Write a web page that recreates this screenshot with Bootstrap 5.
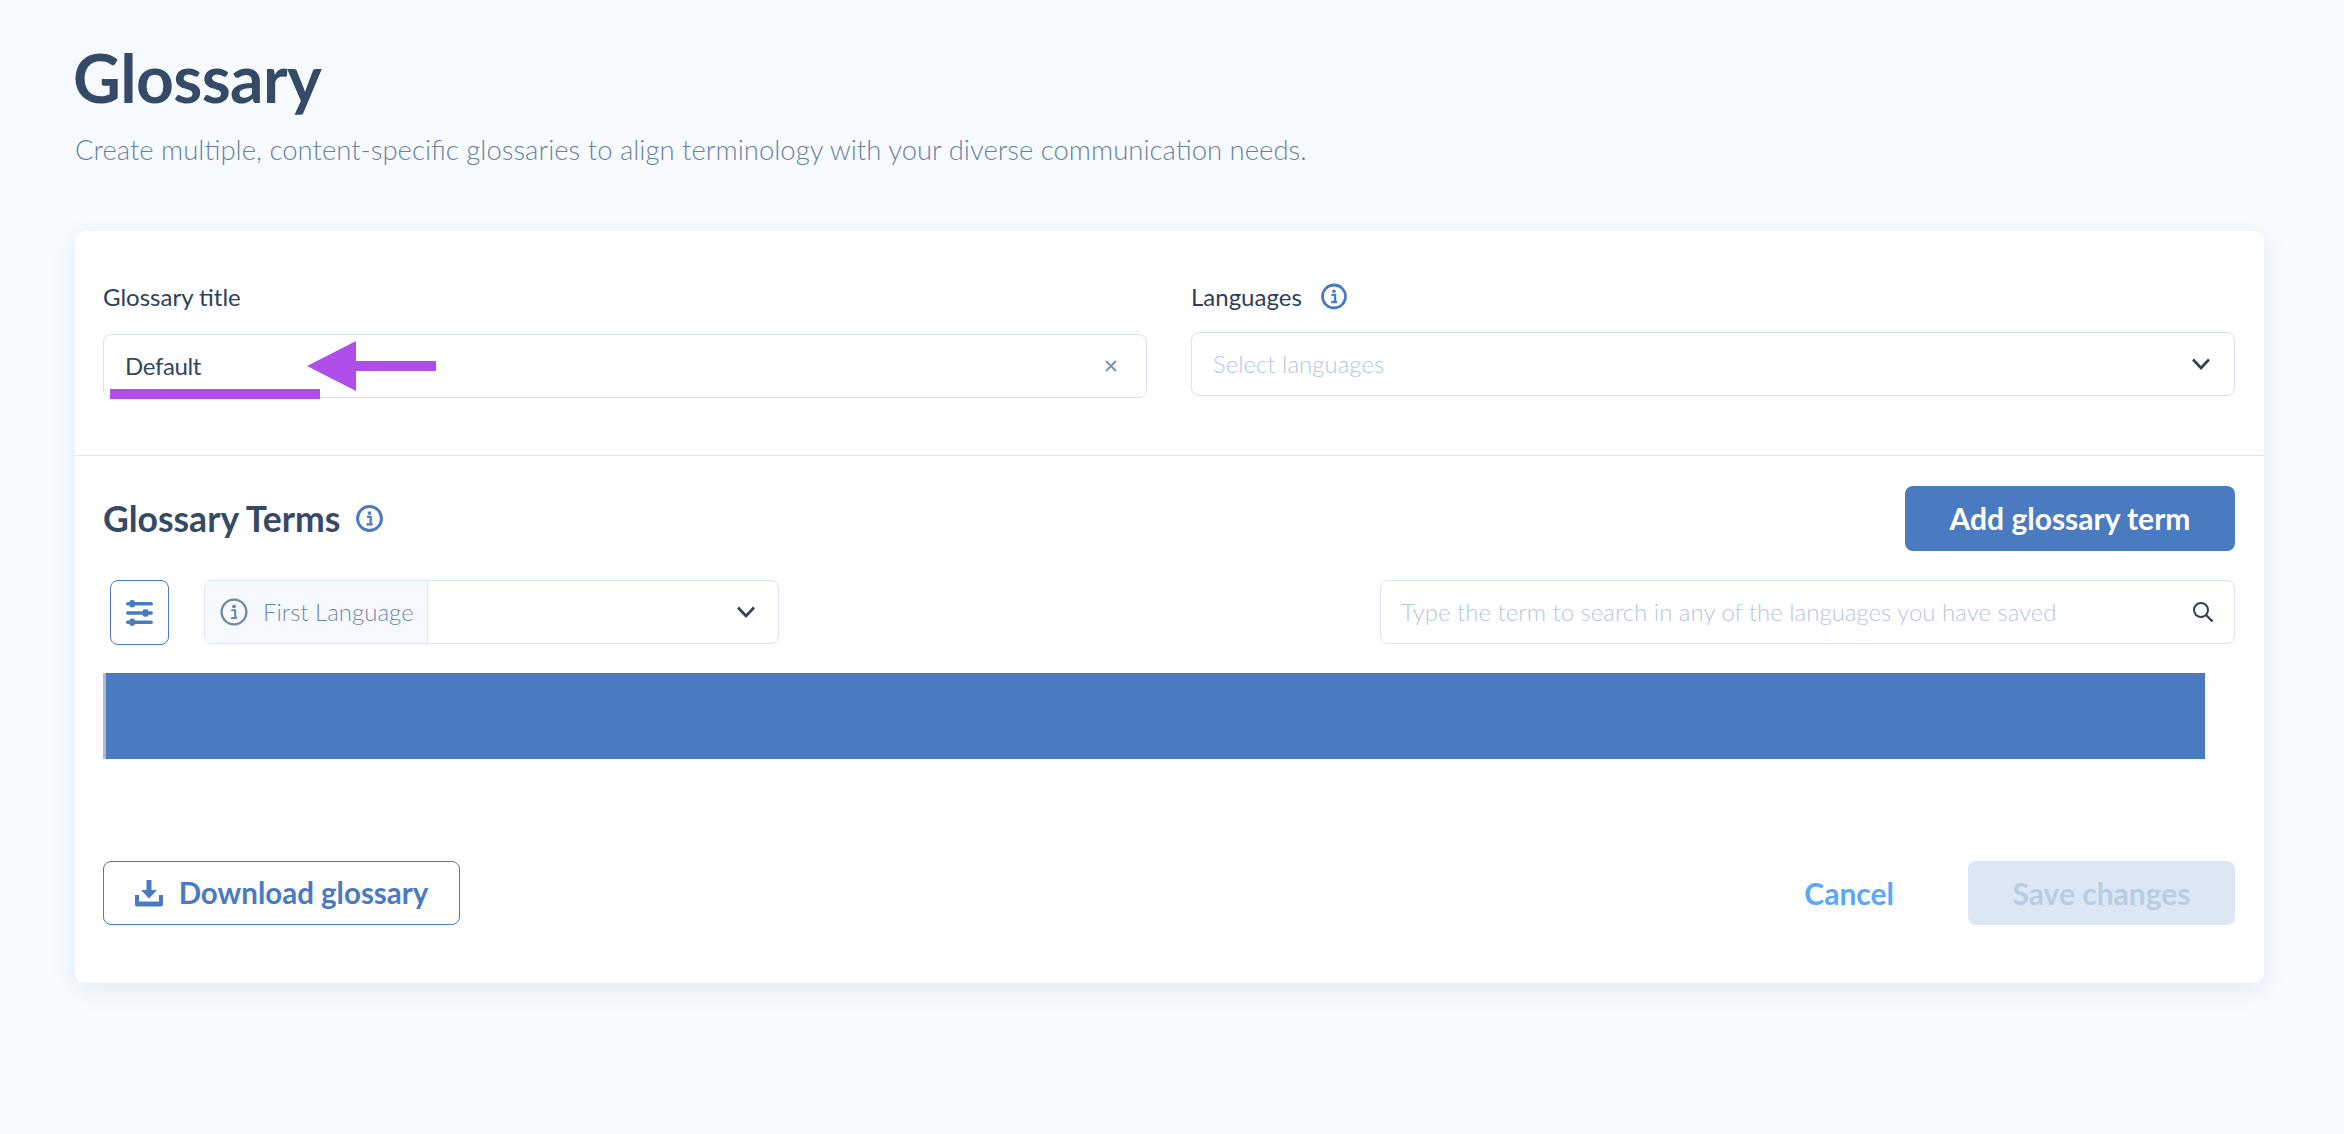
<!DOCTYPE html>
<html lang="en">
<head>
<meta charset="utf-8">
<title>Glossary</title>
<link href="https://cdn.jsdelivr.net/npm/bootstrap@5.3.0/dist/css/bootstrap.min.css" rel="stylesheet">
<style>
html,body{height:100%}
body{background:#f7fbff;font-family:"Lato","Liberation Sans",sans-serif;color:#2f4058;overflow:hidden}
.stage{position:relative}
.page-wrap{padding:42px 80px 0 75px}
.page-title{font-size:66px;line-height:72px;font-weight:700;color:#344a66;margin:0 0 0 -2px;letter-spacing:-.6px}
.page-sub{font-size:27.5px;line-height:36px;font-weight:300;color:#6a82a0;margin:18px 0 0}
.sheet{margin-top:63px;height:752px;background:#fff;border-radius:10px;box-shadow:0 6px 24px rgba(90,125,170,.14)}
.top-band{padding:45px 29px 0 28px;height:225px;border-bottom:1px solid #d9e7f4}
.two-col{--bs-gutter-x:44px}
.lbl{font-size:24px;line-height:30px;color:#2f4058;height:41px}
.lbl-a{margin-bottom:17px}
.lbl-b{margin-bottom:15px}
.info-gap{margin-left:19px}
.field{height:64px;border:1px solid #d5e3f2;border-radius:8px;background:#fff;font-size:24px;padding:0 21px}
.field-title{padding-right:28px}
.field-lang{padding-right:23px}
.field-val{color:#36465c;letter-spacing:-.35px}
.ph{color:#b5c7dc;font-weight:300;font-size:24px}
.terms{padding:30px 29px 0 28px}
.terms-h{height:65px}
.terms-title{font-size:35.5px;font-weight:700;color:#344a66;margin:0;line-height:40px}
.add-btn{width:330px;height:65px;background:#4a7bc1;color:#fff;border:0;border-radius:8px;font-size:30px;font-weight:700;padding:0}
.tools{margin-top:29px;height:65px;padding-left:7px}
.filter-btn{width:59px;height:65px;border:1px solid #4a7bc1;border-radius:8px;background:#fff;padding:0}
.lang-group{width:575px;height:64px;margin-left:35px;border:1px solid #d9e6f3;border-radius:8px;overflow:hidden}
.lang-add{width:223px;background:#f6fafe;border-right:1px solid #d9e6f3;color:#7189a5;font-size:24px;padding-left:15px;font-weight:300}
.lang-label{margin-left:7px}
.lang-pick{padding-right:22px}
.search-box{width:855px;height:64px;border:1px solid #d9e6f3;border-radius:8px;padding:0 20px}
.bar{margin-top:28px;width:2102px;height:86px;background:#4a7bc1;border-left:3px solid #a9bdd7}
.acts{margin-top:102px;height:64px}
.dl-btn{width:357px;height:64px;border:1px solid #4a7bc1;border-radius:8px;background:#fff;color:#4a7bc1;font-size:29.5px;font-weight:700;padding:0}
.cancel-btn{color:#5aa9f8;font-size:30px;font-weight:700;background:none;border:0;padding:0}
.save-btn{width:267px;height:64px;margin-left:74px;background:#dce7f3;color:#b9cde2;border:0;border-radius:8px;font-size:30px;font-weight:700;padding:0}
.mark-over{position:absolute;left:0;top:0;pointer-events:none}
</style>
</head>
<body>
<div class="stage">
<div class="page-wrap">
  <h1 class="page-title">Glossary</h1>
  <p class="page-sub">Create multiple, content-specific glossaries to align terminology with your diverse communication needs.</p>
  <div class="sheet">
    <div class="top-band">
      <div class="row two-col">
        <div class="col-6">
          <div class="lbl lbl-a d-flex align-items-center">Glossary title</div>
          <div class="field field-title d-flex align-items-center justify-content-between">
            <span class="field-val">Default</span>
            <svg width="14" height="14" viewBox="0 0 14 14"><path d="M2 2l10 10M12 2L2 12" stroke="#7f93aa" stroke-width="2" fill="none"/></svg>
          </div>
        </div>
        <div class="col-6">
          <div class="lbl lbl-b d-flex align-items-center">Languages
            <svg class="info-gap" width="26" height="27" viewBox="0 0 26 26"><circle cx="13" cy="13" r="11.5" fill="none" stroke="#4a7bc1" stroke-width="2.8"/><circle cx="13" cy="7.8" r="1.8" fill="#4a7bc1"/><path d="M10.5 11.4h3.6v7h1.8M10.2 18.6h5.8" fill="none" stroke="#4a7bc1" stroke-width="2.2"/></svg>
          </div>
          <div class="field field-lang d-flex align-items-center justify-content-between">
            <span class="ph">Select languages</span>
            <svg width="20" height="14" viewBox="0 0 20 14"><path d="M2 2.5l8 8.5 8-8.5" stroke="#2f4058" stroke-width="2.6" fill="none"/></svg>
          </div>
        </div>
      </div>
    </div>
    <div class="terms">
      <div class="terms-h d-flex align-items-center justify-content-between">
        <div class="d-flex align-items-center gap-3">
          <h2 class="terms-title">Glossary Terms</h2>
          <svg width="27" height="27" viewBox="0 0 26 26"><circle cx="13" cy="13" r="11.5" fill="none" stroke="#4a7bc1" stroke-width="2.8"/><circle cx="13" cy="7.8" r="1.8" fill="#4a7bc1"/><path d="M10.5 11.4h3.6v7h1.8M10.2 18.6h5.8" fill="none" stroke="#4a7bc1" stroke-width="2.2"/></svg>
        </div>
        <button class="add-btn" type="button">Add glossary term</button>
      </div>
      <div class="tools d-flex align-items-start">
        <button class="filter-btn d-flex align-items-center justify-content-center" type="button" aria-label="Filters">
          <svg width="27" height="28" viewBox="0 0 27 28" fill="#4a7bc1"><rect x="0" y="3" width="27" height="3.6" rx="1.8"/><rect x="3.5" y="1" width="5.5" height="7.6" rx="2.4"/><rect x="0" y="12.2" width="27" height="3.6" rx="1.8"/><rect x="16.5" y="10.2" width="6" height="7.6" rx="2.4"/><rect x="0" y="21.4" width="27" height="3.6" rx="1.8"/><rect x="3.5" y="19.4" width="5.5" height="7.6" rx="2.4"/></svg>
        </button>
        <div class="lang-group d-flex">
          <div class="lang-add d-flex align-items-center gap-2">
            <svg width="28" height="28" viewBox="0 0 26 26"><circle cx="13" cy="13" r="11.5" fill="none" stroke="#7189a5" stroke-width="2.2"/><circle cx="13" cy="7.8" r="1.8" fill="#7189a5"/><path d="M10.5 11.4h3.6v7h1.8M10.2 18.6h5.8" fill="none" stroke="#7189a5" stroke-width="2"/></svg>
            <span class="lang-label">First Language</span>
          </div>
          <div class="lang-pick flex-grow-1 d-flex align-items-center justify-content-end">
            <svg width="20" height="14" viewBox="0 0 20 14"><path d="M2 2.5l8 8.5 8-8.5" stroke="#2f4058" stroke-width="2.6" fill="none"/></svg>
          </div>
        </div>
        <div class="search-box ms-auto d-flex align-items-center justify-content-between">
          <span class="ph">Type the term to search in any of the languages you have saved</span>
          <svg width="22" height="22" viewBox="0 0 22 22"><circle cx="9" cy="9" r="7" fill="none" stroke="#2f4058" stroke-width="2"/><path d="M14 14l6.5 6.5" stroke="#2f4058" stroke-width="2.4"/></svg>
        </div>
      </div>
      <div class="bar"></div>
      <div class="acts d-flex align-items-center">
        <button class="dl-btn d-flex align-items-center justify-content-center gap-3" type="button">
          <svg width="28" height="27" viewBox="0 0 28 27" fill="#4a7bc1"><path d="M11.5 0h5v10h5.5L14 18.5 6 10h5.5z"/><path d="M0 15h4v6.5h20V15h4v9.5a2 2 0 0 1-2 2H2a2 2 0 0 1-2-2z"/></svg>
          <span>Download glossary</span>
        </button>
        <button class="cancel-btn ms-auto" type="button">Cancel</button>
        <button class="save-btn" type="button">Save changes</button>
      </div>
    </div>
  </div>
</div>
<svg class="mark-over" width="2344" height="500" viewBox="0 0 2344 500" fill="#b04ee9"><polygon points="307,366 356,341 356,361 436,361 436,371 356,371 356,391"/><rect x="110" y="389" width="210" height="10"/></svg>
</div>
<script src="https://cdn.jsdelivr.net/npm/bootstrap@5.3.0/dist/js/bootstrap.bundle.min.js"></script>
</body>
</html>
